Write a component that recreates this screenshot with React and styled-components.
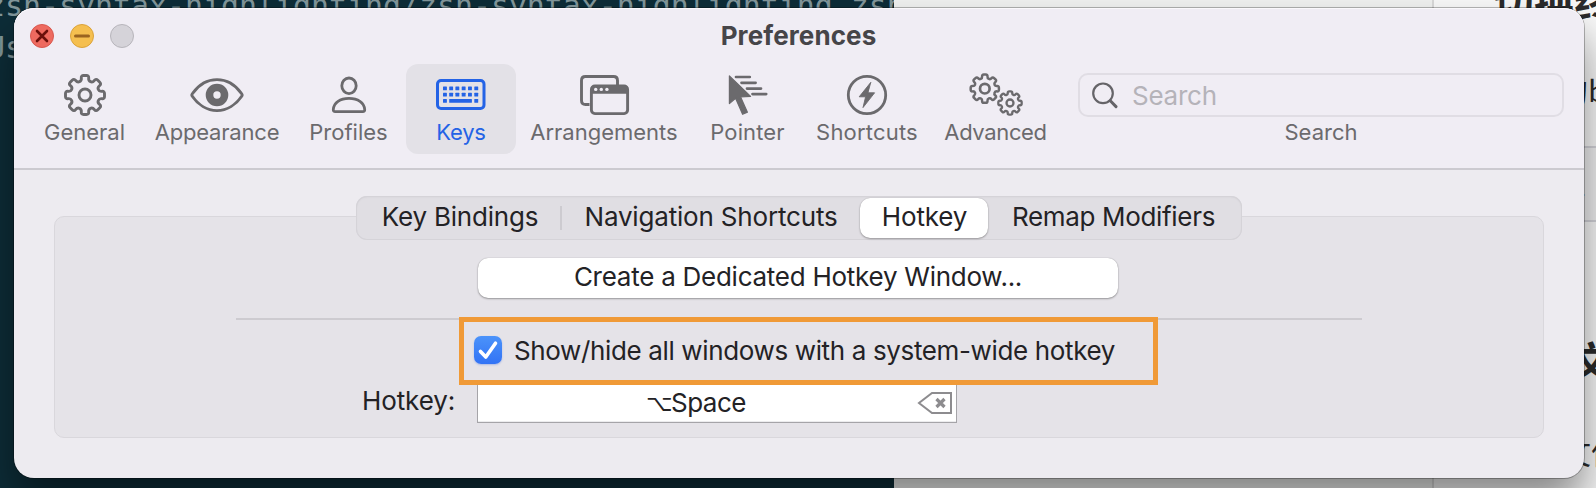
import React from 'react';
import styled, { createGlobalStyle, css } from 'styled-components';

const GlobalStyle = createGlobalStyle`
  *, *::before, *::after { box-sizing: border-box; }
  html, body { margin: 0; padding: 0; overflow: hidden; }
  body { font-family: Inter, "Noto Sans", "Noto Sans CJK SC", sans-serif; color: #232225; }
  button, input { font: inherit; color: inherit; border: 0; margin: 0; background: none; }
`;

const Desktop = styled.div`
  position: relative;
  display: flex;
  width: 1596px;
  height: 488px;
  overflow: hidden;
`;

/* Applications behind the preferences window */
const Terminal = styled.div`
  flex: none;
  width: 894px;
  overflow: hidden;
  background: #0d2d38;
  color: #82979b;
  font: 29.9px/41px "DejaVu Sans Mono", monospace;
  white-space: pre;
`;
const TerminalLine = styled.div`
  margin-left: -13px;
  height: 41px;
  &:first-child { margin-top: -15px; height: 42px; }
`;
const PageSidebar = styled.div`
  flex: none;
  width: 540px;
  background: #f1f2f1;
  border-right: 2px solid #d9d9d9;
`;
const PageContent = styled.div`
  flex: 1;
  overflow: hidden;
  background: #f9f9f9;
  color: #2b2b2b;
  font-family: "Noto Sans CJK SC", sans-serif;
  white-space: nowrap;
`;
const PageTitle = styled.div`
  margin: -27px 0 0 60px;
  font-size: 40px;
  font-weight: 700;
  line-height: 56px;
`;
const PageText = styled.div`
  margin: ${p => p.$top}px 0 0 ${p => p.$left}px;
  font-size: 30px;
  line-height: 40px;
`;
const PageHeading = styled(PageText)`
  font-size: 40px;
  font-weight: 700;
`;
const PageQuote = styled.div`
  height: 76px;
  margin-top: 37px;
  border: solid #d4d4da;
  border-width: 2px 0;
  background: #f1f1f2;
  padding: 26px 0 0 125px;
  font-size: 26px;
  line-height: 40px;
`;

/* Window chrome */
const Window = styled.main`
  position: absolute;
  left: 14px;
  top: 8px;
  width: 1570px;
  height: 470px;
  border-radius: 20px;
  background: #edebf0;
  box-shadow: 0 0 0 1px rgba(0, 0, 0, .27), 0 26px 44px rgba(0, 0, 0, .46);
`;
const Header = styled.header`
  height: 162px;
  border-radius: 20px 20px 0 0;
  background: #f0edf4;
  border-bottom: 2px solid #cccad0;
  box-shadow: inset 0 1px 0 #faf8fc;
`;
const TitleBar = styled.div`
  display: grid;
  grid-template-columns: 1fr auto 1fr;
  align-items: center;
  height: 56px;
  padding-left: 16px;
`;
const Lights = styled.div`
  display: flex;
  gap: 16px;
`;
const Light = styled.span`
  display: flex;
  width: 24px;
  height: 24px;
  border-radius: 50%;
  background: ${p => p.$fill};
  border: 1px solid ${p => p.$edge};
`;
const Title = styled.h1`
  margin: 0 17px 1px 0;
  color: #464548;
  font-size: 26px;
  line-height: 32px;
  font-weight: 700;
  letter-spacing: .1px;
`;
const Toolbar = styled.nav`
  display: flex;
  padding-left: 12px;
`;
const ToolButton = styled.button`
  display: flex;
  flex-direction: column;
  align-items: center;
  flex: none;
  width: ${p => p.$w}px;
  height: 90px;
  padding: 7px 0 0;
  border-radius: 12px;
  color: #6b6a6d;
  font-size: 22px;
  line-height: 26px;
  letter-spacing: ${p => p.$track || 0}px;
  white-space: nowrap;
  ${p => p.$active && css`
    background: #e3e1e7;
    color: #2463e6;
  `}
`;
const ToolIcon = styled.svg`
  display: block;
  flex: none;
  width: 60px;
  height: 48px;
  fill: none;
  stroke: currentColor;
  stroke-width: 2.8;
  stroke-linejoin: round;
  stroke-linecap: round;
`;
const SearchGroup = styled.div`
  display: flex;
  flex-direction: column;
  align-items: center;
  margin-left: 18px;
  padding-top: 9px;
  width: 486px;
  color: #6b6a6d;
  font-size: 22px;
  line-height: 26px;
`;
const SearchField = styled.label`
  display: flex;
  align-items: center;
  gap: 14px;
  width: 100%;
  height: 44px;
  margin-bottom: 2px;
  padding: 2px 0 0 12px;
  border: 2px solid #e0dde4;
  border-radius: 10px;
  font-size: 26px;
  svg { flex: none; }
`;
const SearchInput = styled.input`
  flex: 1;
  min-width: 0;
  padding: 0;
  line-height: 32px;
  letter-spacing: -.25px;
  &::placeholder { color: #b5b3b9; opacity: 1; }
`;

/* Content */
const Body = styled.section`
  display: flex;
  flex-direction: column;
  align-items: center;
  padding: 26px 40px 0;
`;
const Tabs = styled.div`
  position: relative;
  z-index: 1;
  display: flex;
  align-items: center;
  width: 886px;
  height: 44px;
  margin-bottom: -24px;
  border-radius: 11px;
  background: #e0dee3;
  box-shadow: inset 0 0 0 1px #d5d3d8, inset 0 1px 3px rgba(0, 0, 0, .05);
`;
const Tab = styled.button`
  flex: none;
  width: ${p => p.$w}px;
  height: 40px;
  padding: 0 ${p => p.$shiftBack || 0}px 3px ${p => p.$shift || 0}px;
  font-size: 26px;
  line-height: 37px;
  letter-spacing: ${p => p.$track}px;
  white-space: nowrap;
  border-radius: 10px;
  ${p => p.$active && css`
    background: #fff;
    box-shadow: 0 1px 2px rgba(0, 0, 0, .3), 0 0 1px rgba(0, 0, 0, .25);
  `}
`;
const TabDivider = styled.span`
  flex: none;
  width: 2px;
  height: 24px;
  background: #cdcbd0;
`;
const Group = styled.div`
  display: flex;
  flex-direction: column;
  align-items: center;
  width: 1490px;
  height: 222px;
  padding-top: 41px;
  border: 1px solid #d9d7dc;
  border-radius: 10px;
  background: #e5e3e8;
`;
const PushButton = styled.button`
  width: 640px;
  height: 40px;
  flex: none;
  margin-right: 2px;
  padding: 0 0 2px;
  border-radius: 10px;
  background: #fff;
  box-shadow: 0 1px 2px rgba(0, 0, 0, .32), 0 0 1px rgba(0, 0, 0, .3);
  font-size: 26px;
  line-height: 38px;
  letter-spacing: -.26px;
`;
const Separator = styled.hr`
  flex: none;
  width: 1126px;
  height: 2px;
  margin: 20px 0 0;
  border: 0;
  background: #cdcbd0;
`;
const HotkeyToggle = styled.label`
  position: relative;
  z-index: 1;
  flex: none;
  display: flex;
  align-items: center;
  gap: 12px;
  width: 699px;
  height: 68px;
  margin: -3px 0 -4px 19px;
  padding: 0 0 2px 10px;
  border: 5px solid #f09a37;
  font-size: 26px;
  line-height: 32px;
  letter-spacing: -.36px;
  white-space: nowrap;
`;
const ToggleText = styled.span`
  padding-top: 2px;
`;
const Checkbox = styled.span`
  width: 28px;
  height: 28px;
  border-radius: 7px;
  background: linear-gradient(#4b93fa, #3273f5);
  box-shadow: 0 1px 2px rgba(40, 90, 220, .3);
  svg { display: block; }
`;
const HotkeyRow = styled.div`
  align-self: flex-start;
  display: flex;
  align-items: center;
  padding-left: 307px;
  font-size: 26px;
  line-height: 32px;
`;
const HotkeyLabel = styled.span`
  width: 115px;
  padding-bottom: 2px;
  letter-spacing: -.1px;
`;
const HotkeyField = styled.div`
  display: flex;
  align-items: center;
  width: 480px;
  height: 42px;
  padding: 2px 3px 0 0;
  border: 1px solid #a5a4a8;
  background: #fff;
  box-shadow: inset 0 -1px 0 #ececee;
`;
const HotkeyValue = styled.span`
  flex: 1;
  display: flex;
  justify-content: center;
  align-items: center;
  padding-right: 3px;
  letter-spacing: -.5px;
`;
const OptionKey = styled.span`
  margin-right: -1px;
  font-family: "DejaVu Sans", sans-serif;
  font-size: 23px;
  line-height: 32px;
`;

/* Closed outline with softened corners */
function rounded(points, r) {
  const n = points.length;
  const toward = (a, b) => {
    const d = Math.hypot(b[0] - a[0], b[1] - a[1]);
    const k = Math.min(r / d, 0.5);
    return [a[0] + (b[0] - a[0]) * k, a[1] + (b[1] - a[1]) * k].map(v => v.toFixed(2)).join(' ');
  };
  return points.map((p, i) => {
    const before = toward(p, points[(i + n - 1) % n]);
    const after = toward(p, points[(i + 1) % n]);
    return `${i ? 'L' : 'M'}${before}Q${p[0].toFixed(2)} ${p[1].toFixed(2)} ${after}`;
  }).join('') + 'Z';
}

function gear(cx, cy, outer, inner) {
  const points = [];
  for (let i = 0; i < 8; i++) {
    [[inner, -13.5], [outer, -11.5], [outer, 11.5], [inner, 13.5]].forEach(([r, deg]) => {
      const a = ((i * 45 + deg) * Math.PI) / 180;
      points.push([cx + r * Math.sin(a), cy - r * Math.cos(a)]);
    });
  }
  return rounded(points, outer * 0.13);
}

const Icon = ({ children }) => <ToolIcon viewBox="-30 -24 60 48">{children}</ToolIcon>;

const GeneralIcon = () => (
  <Icon><path d={gear(0, 0, 19.9, 14.6)} strokeWidth="2.9" /><circle r="6" strokeWidth="2.9" /></Icon>
);
const AppearanceIcon = () => (
  <Icon>
    <path d="M-24.6 1.4Q-25.8 0-24.6-1.4C-19-9.3-10-15.3 0-15.3S19-9.3 24.6-1.4Q25.8 0 24.6 1.4C19 9.6 10 15.6 0 15.6S-19 9.6-24.6 1.4Z" />
    <circle r="7.5" strokeWidth="7.6" />
  </Icon>
);
const ProfilesIcon = () => (
  <Icon>
    <ellipse cx="0" cy="-9.2" rx="7.2" ry="7.8" />
    <path d="M-13.8 16.6Q-15.8 16.6-15.7 14.5C-15.2 7.4-8.8 3.4 0 3.4S15.2 7.4 15.7 14.5Q15.8 16.6 13.8 16.6Z" />
  </Icon>
);
const KeysIcon = () => (
  <Icon>
    <rect x="-23.5" y="-14.5" width="46.5" height="28" rx="3.5" strokeWidth="3" />
    <g fill="currentColor" stroke="none">
      {[-8.5, -2.2].map(y => [-18, -11.8, -5.6, .7, 7, 13.3].map(x => (
        <rect key={`${x},${y}`} x={x} y={y} width="3.9" height="3.8" rx=".5" />
      )))}
      <rect x="-18" y="4" width="3.9" height="3.8" rx=".5" />
      <rect x="-11.8" y="4" width="22.7" height="3.8" rx=".5" />
      <rect x="13.3" y="4" width="3.9" height="3.8" rx=".5" />
    </g>
  </Icon>
);
const ArrangementsIcon = () => (
  <Icon>
    <path d="M-14.5 9.5H-18.5Q-22.5 9.5-22.5 5.5V-14.5Q-22.5-18.5-18.5-18.5H9.5Q13.5-18.5 13.5-14.5V-10" strokeWidth="2.9" strokeLinecap="butt" />
    <rect x="-12.6" y="-9" width="36.2" height="27.6" rx="3.5" strokeWidth="2.9" />
    <path d="M-13-1.2V-6Q-13-9.5-9.5-9.5H20.5Q24-9.5 24-6V-1.2Z" fill="currentColor" stroke="none" />
    <g fill="#f0edf4" stroke="none">
      <circle cx="-8.3" cy="-5.6" r="1.7" /><circle cx="-2.7" cy="-5.6" r="1.7" /><circle cx="2.9" cy="-5.6" r="1.7" />
    </g>
  </Icon>
);
const PointerIcon = () => (
  <Icon>
    <path d="M-18.6-19V8.6L-12.4 3.2-5.4 19.3-.6 17.2-7.4 2 2.6 1.4Z" fill="currentColor" strokeWidth="1.2" />
    <path d="M-12-18H1.8M-6.5-12.2H7.6M-1-6.4H13M4.5-.9H18.2" strokeWidth="2.7" />
  </Icon>
);
const ShortcutsIcon = () => (
  <Icon>
    <circle r="18.7" />
    <path d="M3.6-12.4-7.8 1.8H-1.4L-4 12.6 7.6-2.2H1.2Z" fill="currentColor" strokeWidth=".9" />
  </Icon>
);
const AdvancedIcon = () => (
  <Icon>
    <path d={gear(-11.2, -6.3, 14.4, 10.7)} strokeWidth="2.5" /><circle cx="-11.2" cy="-6.3" r="4.8" strokeWidth="2.7" />
    <path d={gear(14, 8, 11.9, 8.9)} strokeWidth="2.3" /><circle cx="14" cy="8" r="3.5" strokeWidth="2.3" />
  </Icon>
);

const tools = [
  { label: 'General', w: 117, track: 0, Glyph: GeneralIcon },
  { label: 'Appearance', w: 148, track: -0.19, Glyph: AppearanceIcon },
  { label: 'Profiles', w: 115, Glyph: ProfilesIcon },
  { label: 'Keys', w: 110, track: -0.2, active: true, Glyph: KeysIcon },
  { label: 'Arrangements', w: 176, Glyph: ArrangementsIcon },
  { label: 'Pointer', w: 111, track: 0.12, Glyph: PointerIcon },
  { label: 'Shortcuts', w: 128, track: 0.19, Glyph: ShortcutsIcon },
  { label: 'Advanced', w: 129, track: -0.36, Glyph: AdvancedIcon },
];

export default function App() {
  return (
    <Desktop>
      <GlobalStyle />
      <Terminal>
        <TerminalLine>zsh-syntax-highlighting/zsh-syntax-highlighting.zsh</TerminalLine>
        <TerminalLine>Users</TerminalLine>
      </Terminal>
      <PageSidebar />
      <PageContent>
        <PageTitle>切换终端</PageTitle>
        <PageText $top={40} $left={124}>的b</PageText>
        <PageQuote>一</PageQuote>
        <PageHeading $top={117} $left={137}>文</PageHeading>
        <PageText $top={52} $left={127}>文件</PageText>
      </PageContent>

      <Window>
        <Header>
          <TitleBar>
            <Lights>
              <Light $fill="#ee6a5f" $edge="#d8584f">
                <svg width="22" height="22" viewBox="0 0 22 22" fill="none" stroke="#6b100b" strokeWidth="2.6" strokeLinecap="round"><path d="M6 6l10 10M16 6L6 16" /></svg>
              </Light>
              <Light $fill="#f5bf4f" $edge="#dba33a">
                <svg width="22" height="22" viewBox="0 0 22 22" fill="none" stroke="#9a6420" strokeWidth="3" strokeLinecap="round"><path d="M4.5 11h13" /></svg>
              </Light>
              <Light $fill="#d5d3d9" $edge="#b7b5bb" />
            </Lights>
            <Title>Preferences</Title>
          </TitleBar>
          <Toolbar>
            {tools.map(({ label, w, track, active, Glyph }) => (
              <ToolButton key={label} $w={w} $track={track} $active={active}>
                <Glyph />
                {label}
              </ToolButton>
            ))}
            <SearchGroup>
              <SearchField>
                <svg width="26" height="28" viewBox="0 0 26 28" fill="none" stroke="#656468" strokeLinecap="round">
                  <circle cx="11" cy="11.3" r="9.8" strokeWidth="2.2" /><path d="M18.3 18.8L24 24.6" strokeWidth="3" />
                </svg>
                <SearchInput placeholder="Search" />
              </SearchField>
              Search
            </SearchGroup>
          </Toolbar>
        </Header>

        <Body>
          <Tabs>
            <Tab $w={204} $shift={4} $track={-0.2}>Key Bindings</Tab>
            <TabDivider />
            <Tab $w={298} $track={-0.18}>Navigation Shortcuts</Tab>
            <Tab $w={128} $shift={1} $track={-0.15} $active>Hotkey</Tab>
            <Tab $w={254} $shiftBack={3} $track={-0.33}>Remap Modifiers</Tab>
          </Tabs>
          <Group>
            <PushButton>Create a Dedicated Hotkey Window...</PushButton>
            <Separator />
            <HotkeyToggle>
              <Checkbox>
                <svg width="28" height="28" viewBox="0 0 28 28" fill="none" stroke="#fff" strokeWidth="3.6" strokeLinecap="round" strokeLinejoin="round"><path d="M6.5 15.4L11.8 21 21.5 7.2" /></svg>
              </Checkbox>
              <ToggleText>Show/hide all windows with a system-wide hotkey</ToggleText>
            </HotkeyToggle>
            <HotkeyRow>
              <HotkeyLabel>Hotkey:</HotkeyLabel>
              <HotkeyField>
                <HotkeyValue><OptionKey>⌥</OptionKey>Space</HotkeyValue>
                <svg width="36" height="24" viewBox="0 0 36 24" fill="none" stroke="#8d8c8f">
                  <path d="M15 2H34V22H15L2 12Z" strokeWidth="2" /><path d="M19.5 8L27.5 16M27.5 8L19.5 16" strokeWidth="3.2" />
                </svg>
              </HotkeyField>
            </HotkeyRow>
          </Group>
        </Body>
      </Window>
    </Desktop>
  );
}
